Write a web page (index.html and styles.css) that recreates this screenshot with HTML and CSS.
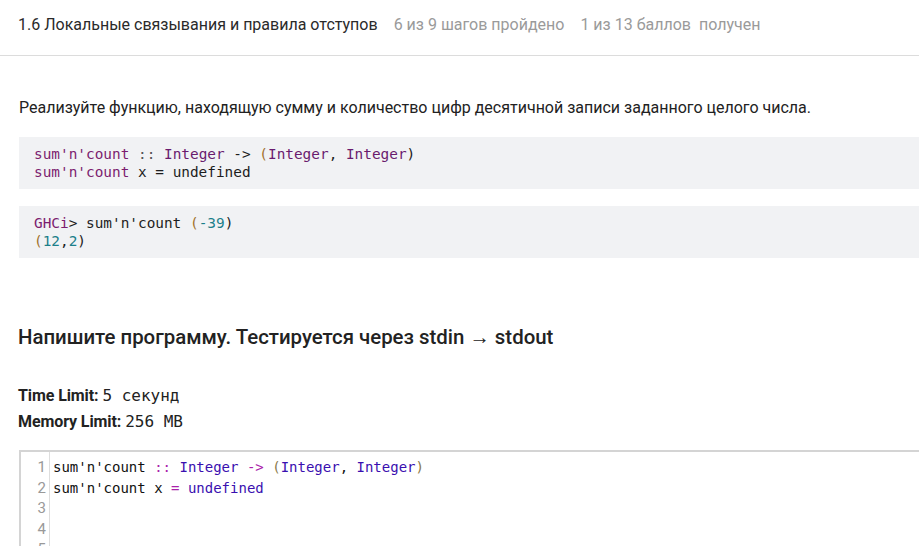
FILE: index.html
```html
<!DOCTYPE html>
<html lang="ru">
<head>
<meta charset="utf-8">
<link rel="stylesheet" href="styles.css">
</head>
<body>
<header class="topbar">
  <span class="title">1.6 Локальные связывания и правила отступов</span>
  <span class="meta">6 из 9 шагов пройдено</span>
  <span class="meta">1 из 13 баллов&nbsp; получен</span>
</header>
<main class="content">
  <p class="lead">Реализуйте функцию, находящую сумму и количество цифр десятичной записи заданного целого числа.</p>
  <pre class="code"><span class="fn">sum'n'count</span> <span class="op">::</span> <span class="ty">Integer</span> -&gt; <span class="pn">(</span><span class="ty">Integer</span>, <span class="ty">Integer</span>)
<span class="fn">sum'n'count</span> x = undefined</pre>
  <pre class="code"><span class="fn">GHCi</span>&gt; sum'n'count <span class="pn">(</span><span class="num">-39</span>)
<span class="pn">(</span><span class="num">12</span>,<span class="num">2</span>)</pre>
  <h2 class="task">Напишите программу. Тестируется через stdin → stdout</h2>
  <div class="limits">
    <div><b>Time Limit:</b> <span class="mono">5 секунд</span></div>
    <div><b>Memory Limit:</b> <span class="mono">256 MB</span></div>
  </div>
  <div class="editor">
    <div class="gutter">
      <div>1</div><div>2</div><div>3</div><div>4</div><div>5</div>
    </div>
    <pre class="lines"><span>sum'n'count <span class="cm-op">::</span> <span class="cm-ty">Integer</span> <span class="cm-op">-&gt;</span> <span class="cm-br">(</span><span class="cm-ty">Integer</span>, <span class="cm-ty">Integer</span><span class="cm-br">)</span></span>
<span>sum'n'count x <span class="cm-op">=</span> <span class="cm-ty">undefined</span></span>
 
 
 </pre>
  </div>
</main>
</body>
</html>
```
FILE: styles.css
```css
html, body {
  margin: 0;
  padding: 0;
  background: #fff;
  overflow: hidden;
}
body {
  font-family: Roboto, "Noto Sans", sans-serif;
  color: #222;
  width: 919px;
  height: 546px;
}
.topbar {
  border-bottom: 1px solid #dcdcdc;
  display: flex;
  align-items: center;
  padding-left: 18px;
  padding-bottom: 6px;
  box-sizing: border-box;
  height: 56px;
  gap: 16px;
}
.title {
  font-size: 16px;
  color: #2a2a2a;
}
.meta {
  font-size: 16px;
  color: #9a9a9a;
}
.content {
  padding-left: 19px;
}
.lead {
  margin: 40px 0 0;
  font-size: 16px;
  line-height: 24px;
  color: #222;
}
.code {
  margin: 17px 0 0;
  background: #f1f2f4;
  padding: 8px 15px;
  font-family: "DejaVu Sans Mono", "Liberation Mono", monospace;
  font-size: 14.4px;
  line-height: 18px;
  color: #1d1d1d;
  margin-right: -20px;
}
.code + .code { margin-top: 17px; }
.fn { color: #7c1d6f; }
.ty { color: #6a1b6e; }
.op { color: #555; }
.pn { color: #a0702a; }
.num { color: #1b7f8a; }
.task {
  margin: 66px 0 0;
  font-size: 20.4px;
  font-weight: 500;
  line-height: 26px;
  color: #222;
  margin-left: -1px;
}
.limits {
  margin-top: 33px;
  font-size: 16px;
  line-height: 26px;
  margin-left: -1px;
}
.limits b {
  font-weight: 700;
  letter-spacing: -0.1px;
}
.mono {
  font-family: "DejaVu Sans Mono", "Liberation Mono", monospace;
  font-size: 16px;
  white-space: pre;
}
.editor {
  margin-top: 15px;
  border-top: 2px solid #d4d4d4;
  border-left: 2px solid #d4d4d4;
  display: flex;
  height: 120px;
  margin-right: -20px;
}
.gutter {
  width: 25px;
  border-right: 1px solid #dedede;
  padding-top: 5px;
  text-align: right;
  padding-right: 3px;
  font-family: Roboto, sans-serif;
  font-size: 15px;
  line-height: 20.6px;
  color: #999;
}
.lines {
  margin: 0;
  padding: 5px 0 0 3px;
  font-family: "DejaVu Sans Mono", "Liberation Mono", monospace;
  font-size: 14px;
  line-height: 20.6px;
  color: #111;
}
.cm-op { color: #aa22aa; }
.cm-ty { color: #3a0fb0; }
.cm-br { color: #8a7a4a; }
```
